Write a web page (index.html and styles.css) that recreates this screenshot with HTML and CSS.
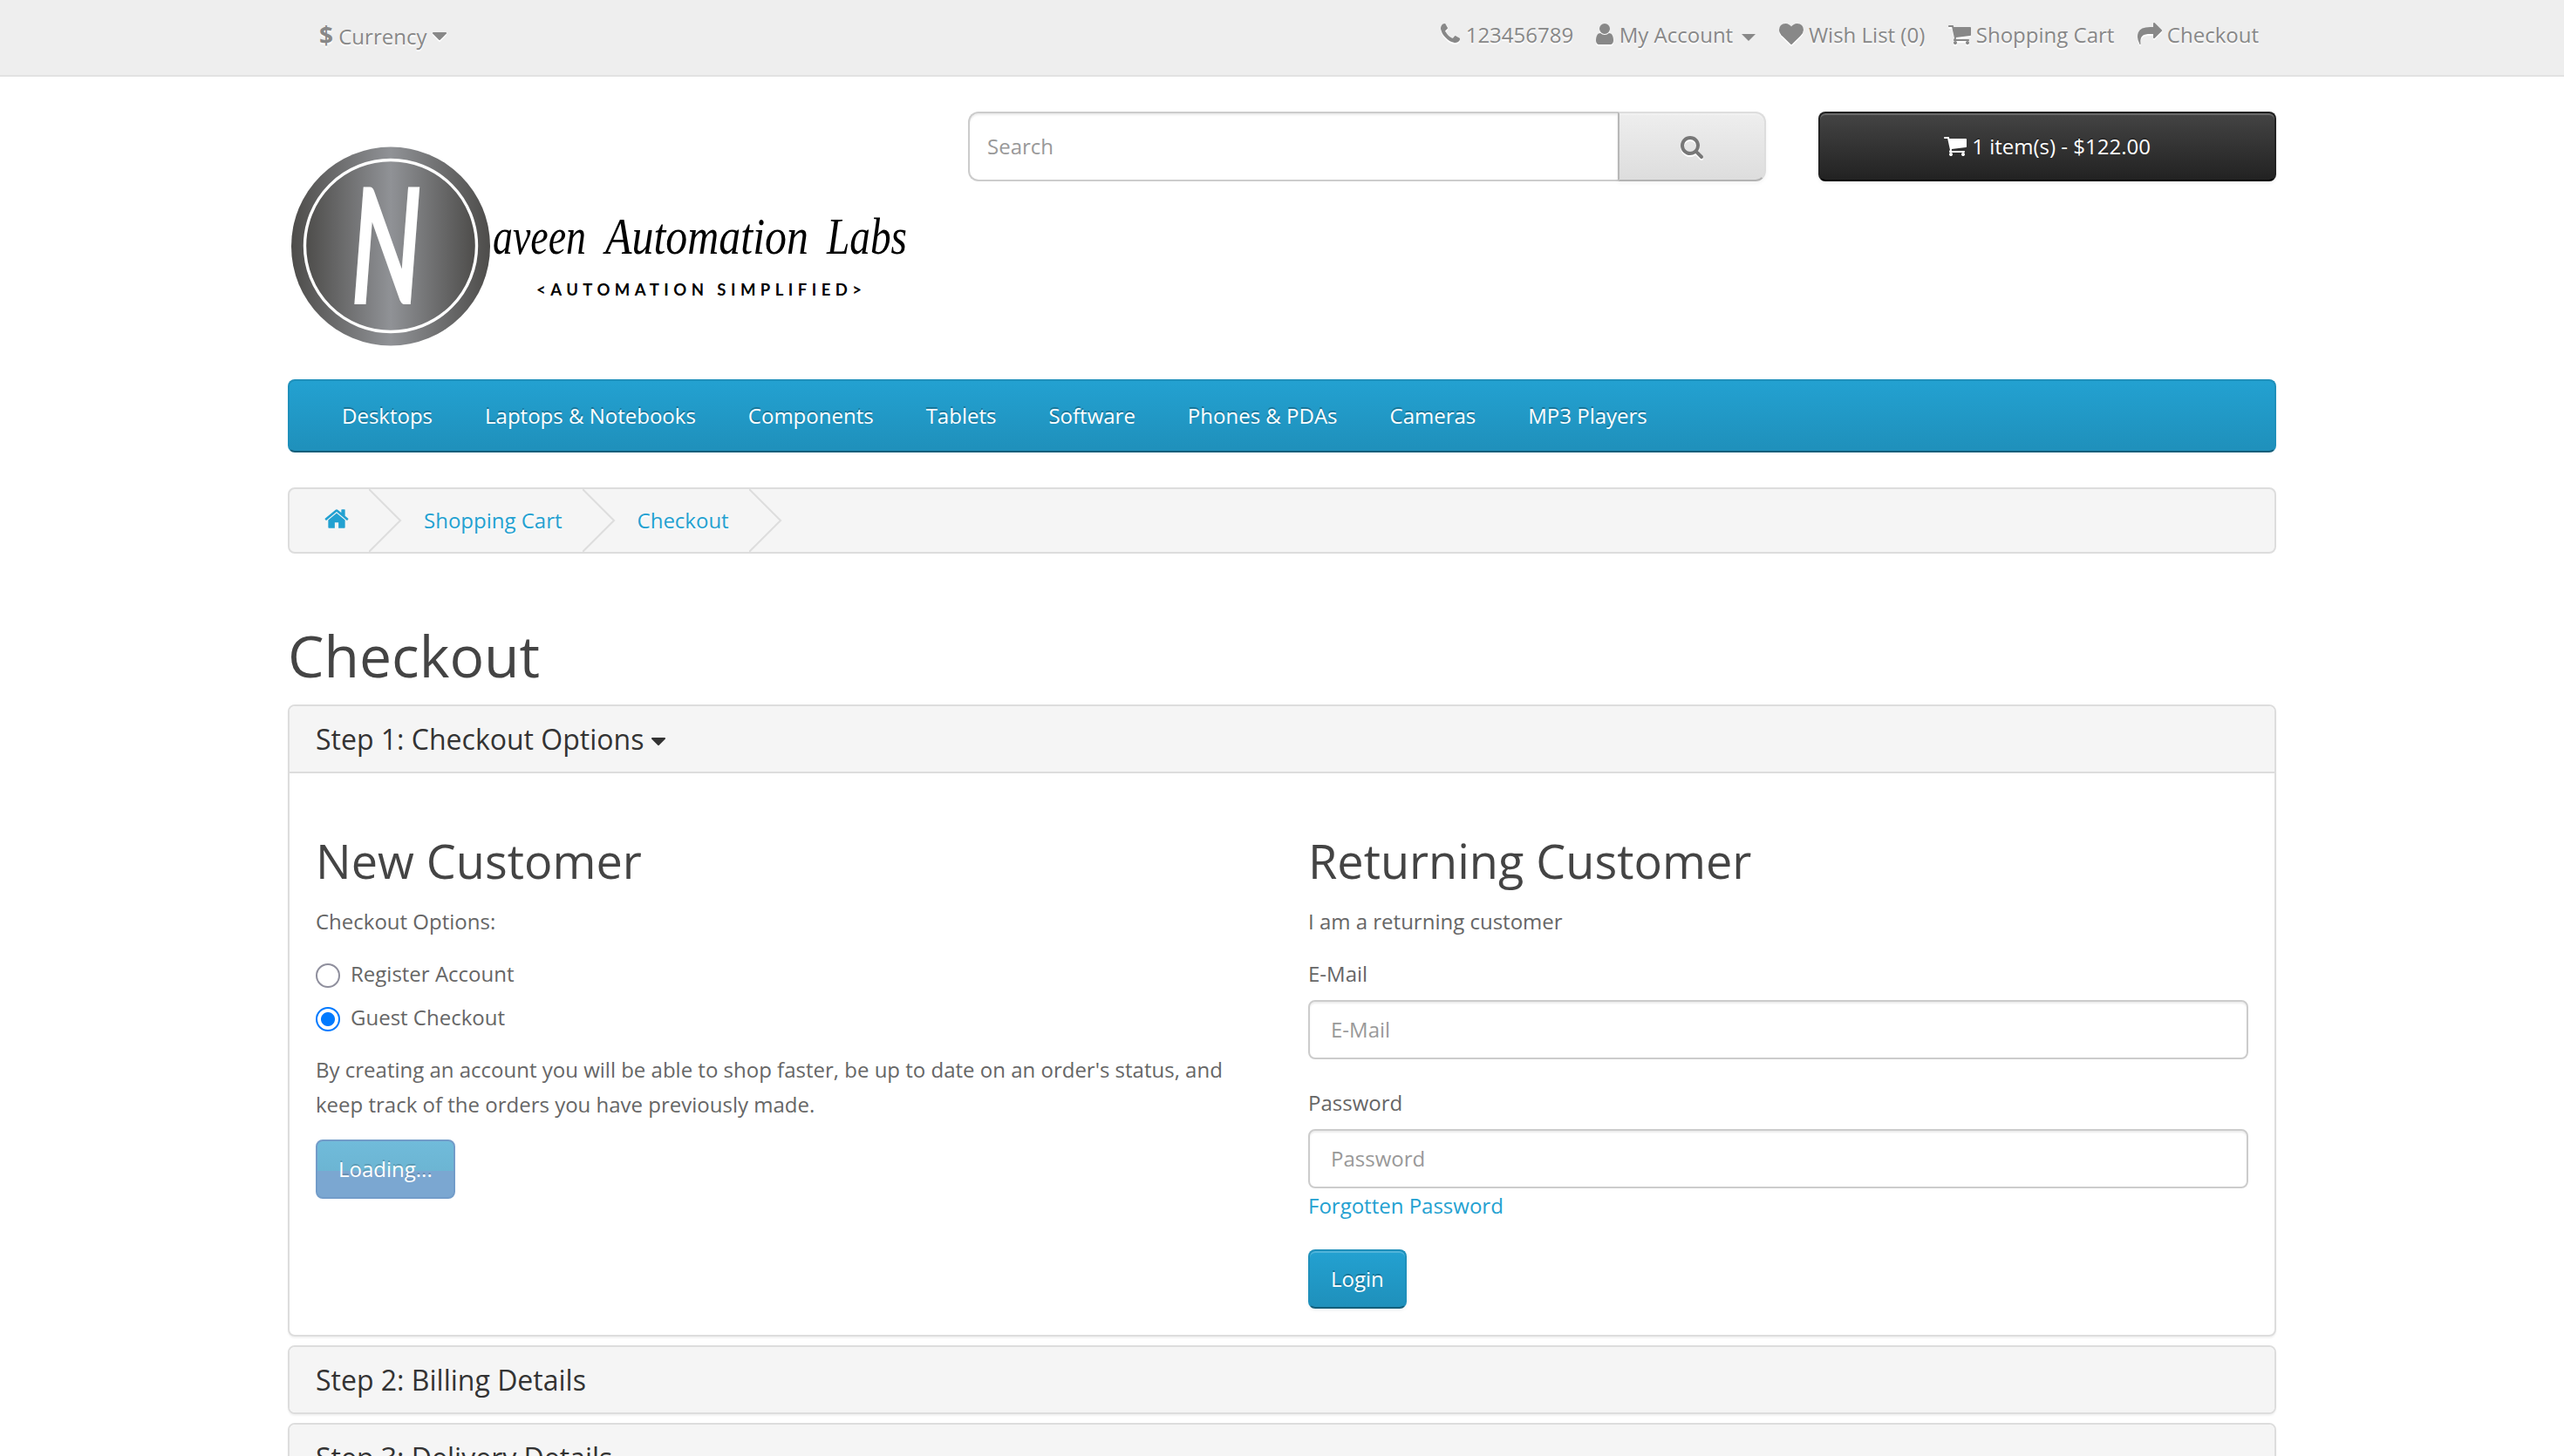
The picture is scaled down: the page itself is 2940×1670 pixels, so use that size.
FILE: index.html
```html
<!DOCTYPE html>
<html lang="en">
<head>
<meta charset="utf-8">
<title>Checkout</title>
<link rel="stylesheet" href="styles.css">
</head>
<body>
<svg class="sprite" aria-hidden="true">
  <symbol id="cart" viewBox="64 0 1664 1792"><path d="M704 1536q0 52-38 90t-90 38-90-38-38-90 38-90 90-38 90 38 38 90zm896 0q0 52-38 90t-90 38-90-38-38-90 38-90 90-38 90 38 38 90zm128-1088v512q0 24-16.5 42.5t-40.5 21.5l-1044 122q13 60 13 70 0 16-24 64h920q26 0 45 19t19 45-19 45-45 19h-1024q-26 0-45-19t-19-45q0-11 8-31.5t16-36 21.5-40 15.5-29.5l-177-823h-204q-26 0-45-19t-19-45 19-45 45-19h256q16 0 28.5 6.5t19.5 15.5 13 24.5 8 26 5.5 29.5 4.5 26h1201q26 0 45 19t19 45z"/></symbol>
  <symbol id="caret" viewBox="384 0 1024 1792"><path d="M1408 704q0 26-19 45l-448 448q-19 19-45 19t-45-19l-448-448q-19-19-19-45t19-45 45-19h896q26 0 45 19t19 45z"/></symbol>
</svg>

<nav class="topbar">
  <div class="container topbar-row">
    <div class="currency"><strong>$</strong> Currency <svg class="icon w16"><use href="#caret"/></svg></div>
    <ul class="top-links">
      <li><svg class="icon w22" viewBox="192 0 1408 1792"><path d="M1600 1240q0 27-10 70.5t-21 68.5q-21 50-122 106-94 51-186 51-27 0-53-3.5t-57.5-12.5-47-14.5-55.5-20.5-49-18q-98-35-175-83-127-79-264-216t-216-264q-48-77-83-175-3-9-18-49t-20.5-55.5-14.5-47-12.5-57.5-3.5-53q0-92 51-186 56-101 106-122 25-11 68.5-21t70.5-10q14 0 21 3 18 6 53 76 11 19 30 54t35 63.5 31 53.5q3 4 17.5 25t21.5 35.5 7 28.5q0 20-28.5 50t-62 55-62 53-28.5 46q0 9 5 22.5t8.5 20.5 14 24 11.5 19q76 137 174 235t235 174q2 1 19 11.5t24 14 20.5 8.5 22.5 5q18 0 46-28.5t53-62 55-62 50-28.5q14 0 28.5 7t35.5 21.5 25 17.5q25 15 53.5 31t63.5 35 54 30q70 35 76 53 3 7 3 21z"/></svg> 123456789</li>
      <li><svg class="icon w20" viewBox="256 0 1280 1792"><path d="M1536 1399q0 109-62.5 187t-150.5 78h-854q-88 0-150.5-78t-62.5-187q0-85 8.5-160.5t31.5-152 58.5-131 94-89 134.5-34.5q131 128 313 128t313-128q76 0 134.5 34.5t94 89 58.5 131 31.5 152 8.5 160.5zm-256-887q0 159-112.5 271.5t-271.5 112.5-271.5-112.5-112.5-271.5 112.5-271.5 271.5-112.5 271.5 112.5 112.5 271.5z"/></svg> My Account <span class="caret"></span></li>
      <li><svg class="icon w28" viewBox="0 0 1792 1792"><path d="M896 1664q-26 0-44-18l-624-602q-10-8-27.5-26t-55.5-65.5-68-97.5-53.5-121-23.5-138q0-220 127-344t351-124q62 0 126.5 21.5t120 58 95.5 68.5 76 68q36-36 76-68t95.5-68.5 120-58 126.5-21.5q224 0 351 124t127 344q0 221-229 450l-623 600q-18 18-44 18z"/></svg> Wish List (0)</li>
      <li><svg class="icon w26"><use href="#cart"/></svg> Shopping Cart</li>
      <li><svg class="icon w28" viewBox="0 0 1792 1792"><path d="M1792 640q0 26-19 45l-512 512q-19 19-45 19t-45-19-19-45v-256h-224q-98 0-175.5 6t-154 21.5-133 42.5-105.5 69.5-80 101-48.5 138.5-17.5 181q0 55 5 123 0 6 2.5 23.5t2.5 26.5q0 15-8.5 25t-23.5 10q-16 0-28-17-7-9-13-22t-13.5-30-10.5-24q-127-285-127-451 0-199 53-333 162-403 875-403h224v-256q0-26 19-45t45-19 45 19l512 512q19 19 19 45z"/></svg> Checkout</li>
    </ul>
  </div>
</nav>

<header class="container header">
  <svg class="logo" viewBox="330 128 750 270">
    <defs>
      <linearGradient id="steel"><stop offset="0" stop-color="#4d4c4a"/><stop offset=".5" stop-color="#909296"/><stop offset="1" stop-color="#4d4c4a"/></linearGradient>
    </defs>
    <circle cx="448" cy="282.5" r="114" fill="url(#steel)"/>
    <circle cx="448" cy="282" r="98.5" fill="url(#steel)" stroke="#fff" stroke-width="3.4"/>
    <text class="monogram" x="403" y="346" textLength="80" lengthAdjust="spacingAndGlyphs">N</text>
    <text class="script" y="291"><tspan x="565" textLength="107" lengthAdjust="spacingAndGlyphs">aveen</tspan> <tspan x="694" textLength="233" lengthAdjust="spacingAndGlyphs">Automation</tspan> <tspan x="948" textLength="92" lengthAdjust="spacingAndGlyphs">Labs</tspan></text>
    <text class="tagline" x="615" y="339" textLength="373">&lt;AUTOMATION SIMPLIFIED&gt;</text>
  </svg>
  <div class="search">
    <input class="search-input" type="text" placeholder="Search">
    <button class="search-btn"><svg class="icon w26" viewBox="64 0 1664 1792"><path d="M1216 832q0-185-131.5-316.5t-316.5-131.5-316.5 131.5-131.5 316.5 131.5 316.5 316.5 131.5 316.5-131.5 131.5-316.5zm512 832q0 52-38 90t-90 38q-54 0-90-38l-343-342q-179 124-399 124-143 0-273.5-55.5t-225-150-150-225-55.5-273.5 55.5-273.5 150-225 225-150 273.5-55.5 273.5 55.5 225 150 150 225 55.5 273.5q0 220-124 399l343 343q37 37 37 90z"/></svg></button>
  </div>
  <button class="cart-btn"><svg class="icon w26"><use href="#cart"/></svg> 1 item(s) - $122.00</button>
</header>

<div class="container">
  <nav class="menu">
    <a>Desktops</a><a>Laptops &amp; Notebooks</a><a>Components</a><a>Tablets</a><a>Software</a><a>Phones &amp; PDAs</a><a>Cameras</a><a>MP3 Players</a>
  </nav>

  <ul class="breadcrumb">
    <li><svg class="icon home" viewBox="64 0 1664 1792"><path d="M1472 992v480q0 26-19 45t-45 19h-384v-384h-256v384h-384q-26 0-45-19t-19-45v-480q0-1 .5-3t.5-3l575-474 575 474q1 2 1 6zm223-69l-62 74q-8 9-21 11h-3q-13 0-21-7l-692-577-692 577q-12 8-24 7-13-2-21-11l-62-74q-8-10-7-23.5t11-21.5l719-599q32-26 76-26t76 26l244 204v-195q0-14 9-23t23-9h192q14 0 23 9t9 23v408l219 182q10 8 11 21.5t-7 23.5z"/></svg></li>
    <li class="sep"><svg viewBox="0 0 38 72"><path d="M0 0L36 36L0 72"/></svg></li>
    <li>Shopping Cart</li>
    <li class="sep"><svg viewBox="0 0 38 72"><path d="M0 0L36 36L0 72"/></svg></li>
    <li>Checkout</li>
    <li class="sep"><svg viewBox="0 0 38 72"><path d="M0 0L36 36L0 72"/></svg></li>
  </ul>

  <h1>Checkout</h1>

  <section class="panel">
    <h4 class="panel-heading open">Step 1: Checkout Options <svg class="icon caret-lg"><use href="#caret"/></svg></h4>
    <div class="panel-body">
      <div class="col">
        <h2>New Customer</h2>
        <p>Checkout Options:</p>
        <div class="radios">
          <label><span class="radio"></span>Register Account</label>
          <label><span class="radio checked"></span>Guest Checkout</label>
        </div>
        <p>By creating an account you will be able to shop faster, be up to date on an order's status, and keep track of the orders you have previously made.</p>
        <button class="btn loading">Loading...</button>
      </div>
      <div class="col">
        <h2>Returning Customer</h2>
        <p>I am a returning customer</p>
        <div class="field">
          <label>E-Mail</label>
          <input type="text" placeholder="E-Mail">
        </div>
        <div class="field">
          <label>Password</label>
          <input type="password" placeholder="Password">
          <a class="link">Forgotten Password</a>
        </div>
        <button class="btn">Login</button>
      </div>
    </div>
  </section>
  <section class="panel"><h4 class="panel-heading">Step 2: Billing Details</h4></section>
  <section class="panel"><h4 class="panel-heading">Step 3: Delivery Details</h4></section>
</div>
</body>
</html>
```
FILE: styles.css
```css
* { box-sizing: border-box; }
html { height: 100%; overflow: hidden; }
body {
  margin: 0;
  height: 100%;
  overflow: hidden;
  background: #fff;
  color: #666;
  font: 400 24px/40px "Open Sans", sans-serif;
}
ul { list-style: none; margin: 0; padding: 0; }
p { margin: 0 0 20px; }
button, input { font: inherit; margin: 0; }
.sprite { display: none; }
.container { width: 2280px; margin: 0 auto; }

.icon {
  height: 28px;
  vertical-align: -4px;
  fill: currentColor;
  overflow: visible;
}
.w16 { width: 16px; }
.w20 { width: 20px; }
.w22 { width: 22px; }
.w26 { width: 26px; }
.w28 { width: 28px; }

/* Top bar */
.topbar { height: 88px; background: #eee; border-bottom: 2px solid #e2e2e2; }
.topbar-row {
  display: flex;
  justify-content: space-between;
  padding: 20px 20px 0 36px;
  color: #888;
  text-shadow: 0 2px 0 #fff;
}
.topbar .icon { filter: drop-shadow(0 2px 0 #fff); }
.currency { padding-top: 2px; }
.currency strong { font-size: 28px; line-height: 1; }
.top-links { display: flex; gap: 26.3px; white-space: nowrap; }
.caret {
  display: inline-block;
  margin-left: 4px;
  vertical-align: middle;
  border-top: 8px solid;
  border-left: 8px solid transparent;
  border-right: 8px solid transparent;
}

/* Header */
.header { display: flex; align-items: flex-start; height: 347px; padding-top: 40px; }
.logo { width: 750px; height: 270px; }
.monogram { font: italic 400 178px Lato, sans-serif; fill: #fff; stroke: #fff; stroke-width: 6px; }
.script { font: italic 400 60px "Liberation Serif", serif; fill: #000; }
.tagline { font: 700 18.5px Lato, sans-serif; fill: #000; }
.search { display: flex; width: 915px; height: 80px; margin: 0 60px 0 30px; }
.search-input {
  flex: 1;
  padding: 0 20px;
  border: 2px solid #ccc;
  border-right: 0;
  border-radius: 12px 0 0 12px;
  box-shadow: inset 0 2px 2px rgba(0, 0, 0, .075);
}
.search-btn {
  width: 170px;
  padding: 2px 0 0;
  color: #777;
  border: 2px solid #ddd;
  border-color: #ddd #ddd #b3b3b3 #b7b7b7;
  border-radius: 0 12px 12px 0;
  background: linear-gradient(#eee, #ddd);
  box-shadow: inset 0 2px 0 rgba(255, 255, 255, .2), 0 2px 4px rgba(0, 0, 0, .05);
}
.search-btn .icon { filter: drop-shadow(0 2px 0 #fff); }
.cart-btn {
  width: 525px;
  height: 80px;
  padding: 0;
  color: #fff;
  border: 2px solid #222;
  border-bottom-color: #000;
  border-radius: 8px;
  background: linear-gradient(#444, #222);
  box-shadow: inset 0 2px 0 rgba(255, 255, 255, .2), 0 2px 4px rgba(0, 0, 0, .05);
  text-shadow: 0 -2px 0 rgba(0, 0, 0, .25);
}

/* Main menu */
.menu {
  display: flex;
  height: 84px;
  padding: 0 30px;
  border: 2px solid #1f90bb;
  border-bottom-color: #145e7a;
  border-radius: 8px;
  background: linear-gradient(#23a1d1, #1f90bb);
  color: #fff;
  text-shadow: 0 -2px 0 rgba(0, 0, 0, .25);
}
.menu a { padding: 20px 30px; }

/* Breadcrumb */
.breadcrumb {
  display: flex;
  height: 76px;
  margin: 40px 0 80px;
  padding-left: 40px;
  border: 2px solid #ddd;
  border-radius: 8px;
  background: #f5f5f5;
  color: #23a1d1;
  text-shadow: 0 2px 0 #fff;
}
.breadcrumb li { padding-top: 16px; }
.breadcrumb .sep { width: 38px; margin: 0 25px 0 23px; padding: 0; }
.sep svg { display: block; width: 38px; height: 72px; fill: none; stroke: #ddd; stroke-width: 2; }
.icon.home { width: 28px; height: 30px; }

/* Headings */
h1, h2, h4 { font-weight: 400; line-height: 1.1; color: #444; }
h1 { margin: 0 0 20px; font-size: 66px; }
h2 { margin: 40px 0 20px; font-size: 54px; }

/* Accordion panels */
.panel {
  margin-bottom: 10px;
  border: 2px solid #ddd;
  border-radius: 8px;
  background: #fff;
  box-shadow: 0 2px 2px rgba(0, 0, 0, .05);
}
.panel-heading {
  height: 75px;
  margin: 0;
  padding: 20px 30px;
  border-radius: 6px;
  background: #f5f5f5;
  color: #333;
  font-size: 32px;
}
.panel-heading.open { height: 77px; border-bottom: 2px solid #ddd; border-radius: 6px 6px 0 0; }
.caret-lg { width: 16px; height: 28px; vertical-align: -4px; }
.panel-body { display: grid; grid-template-columns: 1078px 1078px; gap: 60px; padding: 31px 30px 30px; }

.radios { display: grid; gap: 10px; margin-bottom: 20px; }
.radios label { display: flex; gap: 12px; }
.radio {
  width: 28px;
  height: 28px;
  margin-top: 8px;
  border: 2px solid #8f8f9d;
  border-radius: 50%;
}
.radio.checked {
  border: 2px solid #007aff;
  background: radial-gradient(circle, #007aff 7.5px, #fff 8.5px);
}

.field { display: flex; flex-direction: column; margin-bottom: 30px; }
.field label { margin-bottom: 10px; }
.field input {
  height: 68px;
  padding: 0 24px;
  border: 2px solid #ccc;
  border-radius: 8px;
  box-shadow: inset 0 2px 2px rgba(0, 0, 0, .075);
}
input::placeholder { color: #999; opacity: 1; }
.link { color: #23a1d1; }
.btn {
  display: block;
  height: 68px;
  padding: 0 24px;
  border: 2px solid #1f90bb;
  border-bottom-color: #145e7a;
  border-radius: 8px;
  background: linear-gradient(#23a1d1, #1f90bb);
  box-shadow: inset 0 2px 0 rgba(255, 255, 255, .2), 0 2px 4px rgba(0, 0, 0, .05);
  color: #fff;
  text-shadow: 0 -2px 0 rgba(0, 0, 0, .25);
}
.btn.loading {
  border-color: #729cc9;
  background: linear-gradient(#70bbda, #6cb5d3 53%, #7ba7d1 53%, #7ba7d1);
  box-shadow: none;
  text-shadow: 0 -2px 0 rgba(0, 0, 0, .16);
}
```
